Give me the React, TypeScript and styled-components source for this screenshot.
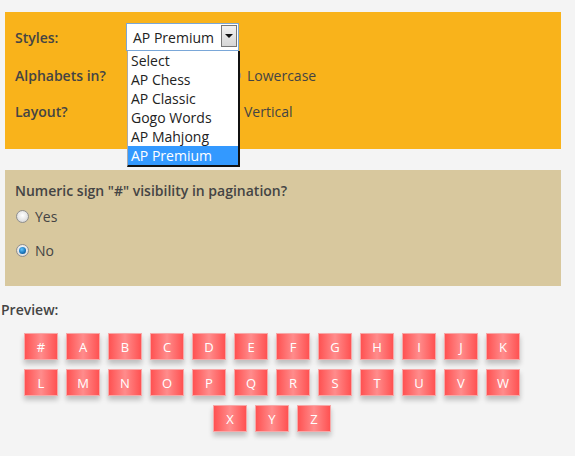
import React from "react";
import styled, { createGlobalStyle } from "styled-components";

const Global = createGlobalStyle`
  html, body { margin: 0; padding: 0; background: #f4f4f4; }
  body { font-family: "Open Sans", "DejaVu Sans", sans-serif; font-size: 14px; color: #444; }
`;

const Page = styled.div`
  width: 575px;
  height: 456px;
  padding-top: 12px;
  box-sizing: border-box;
`;

const Panel = styled.div<{ $bg: string; $pt: number; $pb: number; $mb: number }>`
  width: 556px;
  margin-left: 5px;
  margin-bottom: ${(p) => p.$mb}px;
  box-sizing: border-box;
  background: ${(p) => p.$bg};
  padding: ${(p) => p.$pt}px 10px ${(p) => p.$pb}px 10px;
  display: flex;
  flex-direction: column;
`;

const FormRow = styled.div<{ $mt: number }>`
  display: flex;
  align-items: center;
  height: 28px;
  margin-top: ${(p) => p.$mt}px;
  position: relative;
`;

const Label = styled.div`
  width: 111px;
  font-weight: 600;
  color: #444;
`;

const SelectWrap = styled.div`
  position: relative;
  z-index: 5;
`;

const SelectBox = styled.div`
  width: 113px;
  height: 28px;
  box-sizing: border-box;
  border: 1px solid #7aa7d8;
  background: #fff;
  display: flex;
  align-items: center;
  padding-left: 6px;
  font-size: 14px;
  color: #222;
  position: relative;
`;

const ArrowBtn = styled.div`
  position: absolute;
  right: 1px;
  top: 1px;
  width: 16px;
  height: 22px;
  box-sizing: border-box;
  border: 1px solid #777;
  background: linear-gradient(#f2f2f2, #d6d6d6);
  display: flex;
  align-items: center;
  justify-content: center;
  &::after {
    content: "";
    border-left: 4px solid transparent;
    border-right: 4px solid transparent;
    border-top: 4px solid #111;
  }
`;

const List = styled.div`
  position: absolute;
  left: 1px;
  top: 28px;
  width: 113px;
  box-sizing: border-box;
  background: #fff;
  border-left: 1px solid #aaa;
  border-right: 2px solid #111;
  border-bottom: 2px solid #111;
`;

const Option = styled.div<{ $active?: boolean }>`
  height: 19px;
  line-height: 20px;
  padding-left: 3px;
  font-size: 14px;
  color: ${(p) => (p.$active ? "#fff" : "#222")};
  background: ${(p) => (p.$active ? "#3399ff" : "transparent")};
`;

const Options = styled.div<{ $ml: number }>`
  display: flex;
  align-items: center;
  margin-left: ${(p) => p.$ml}px;
`;

const Choice = styled.label`
  display: flex;
  align-items: center;
  gap: 6px;
  color: #444;
`;

const Radio = styled.span<{ $checked?: boolean }>`
  width: 13px;
  height: 13px;
  box-sizing: border-box;
  border-radius: 50%;
  border: 1px solid #8f8f8f;
  background: radial-gradient(circle at 50% 40%, #ffffff 0%, #e6e6e6 55%, #c8c8c8 100%);
  display: flex;
  align-items: center;
  justify-content: center;
  &::after {
    content: "";
    display: ${(p) => (p.$checked ? "block" : "none")};
    width: 7px;
    height: 7px;
    border-radius: 50%;
    background: radial-gradient(circle at 40% 35%, #5ec4ff 0%, #1873b8 60%, #0a3f70 100%);
  }
`;

const Heading = styled.div`
  font-weight: 600;
  color: #444;
  line-height: 20px;
  margin-top: 1px;
`;

const RadioRow = styled.div<{ $mt: number }>`
  display: flex;
  align-items: center;
  height: 20px;
  margin-top: ${(p) => p.$mt}px;
  padding-left: 1px;
`;

const PreviewLabel = styled.div`
  padding-left: 1px;
  font-weight: 600;
  color: #444;
  line-height: 20px;
  margin-top: 1px;
`;

const Keys = styled.div`
  width: 544px;
  margin-top: 13px;
  display: flex;
  flex-wrap: wrap;
  justify-content: center;
  row-gap: 9px;
`;

const Key = styled.div`
  width: 34px;
  height: 27px;
  box-sizing: border-box;
  margin: 0 4px;
  border: 1px solid #f7a8a8;
  background: linear-gradient(to right, #ff5252 0%, #ff8c8c 50%, #ff5252 100%);
  box-shadow: 0 4px 5px rgba(0, 0, 0, 0.22);
  color: #fff;
  font-size: 13px;
  display: flex;
  align-items: center;
  justify-content: center;
`;

const keys = ["#", ..."ABCDEFGHIJKLMNOPQRSTUVWXYZ".split("")];
const styles = ["Select", "AP Chess", "AP Classic", "Gogo Words", "AP Mahjong", "AP Premium"];

export default function App() {
  return (
    <Page>
      <Global />
      <Panel $bg="#f9b31b" $pt={11} $pb={24} $mb={21}>
        <FormRow $mt={0}>
          <Label>Styles:</Label>
          <SelectWrap>
            <SelectBox>
              AP Premium
              <ArrowBtn />
            </SelectBox>
            <List>
              {styles.map((s) => (
                <Option key={s} $active={s === "AP Premium"}>
                  {s}
                </Option>
              ))}
            </List>
          </SelectWrap>
        </FormRow>
        <FormRow $mt={10}>
          <Label>Alphabets in?</Label>
          <Options $ml={102}>
            <Choice>
              <Radio />
              Lowercase
            </Choice>
          </Options>
        </FormRow>
        <FormRow $mt={8}>
          <Label>Layout?</Label>
          <Options $ml={99}>
            <Choice>
              <Radio />
              Vertical
            </Choice>
          </Options>
        </FormRow>
      </Panel>
      <Panel $bg="#d8c89e" $pt={10} $pb={26} $mb={14}>
        <Heading>Numeric sign "#" visibility in pagination?</Heading>
        <RadioRow $mt={5}>
          <Choice>
            <Radio />
            Yes
          </Choice>
        </RadioRow>
        <RadioRow $mt={14}>
          <Choice>
            <Radio $checked />
            No
          </Choice>
        </RadioRow>
      </Panel>
      <PreviewLabel>Preview:</PreviewLabel>
      <Keys>
        {keys.map((k) => (
          <Key key={k}>{k}</Key>
        ))}
      </Keys>
    </Page>
  );
}
